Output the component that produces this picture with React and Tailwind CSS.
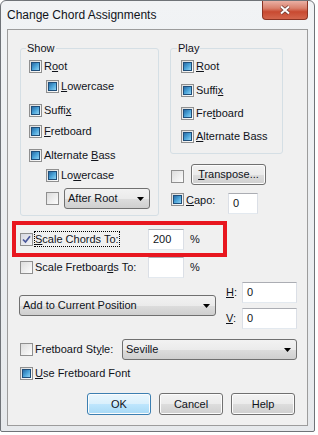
import React from "react";

const Box = ({ state = "off" }) => {
  if (state === "tick") {
    return (
      <span className="flex h-[13px] w-[13px] shrink-0 items-center justify-center border border-[#8f8f8f] bg-gradient-to-br from-[#d6d7e0] to-[#f3f3f7]">
        <svg width="9" height="9" viewBox="0 0 9 9">
          <path d="M1 4.5 L3.5 7 L8 1.2" fill="none" stroke="#4a579a" strokeWidth="1.7" />
        </svg>
      </span>
    );
  }
  return (
    <span className="flex h-[13px] w-[13px] shrink-0 items-center justify-center border border-[#8f8f8f] bg-gradient-to-br from-[#dcdcdc] to-[#fdfdfd]">
      {state === "on" && (
        <span className="h-[9px] w-[9px] border border-[#1f4e79] bg-gradient-to-br from-[#2a6ca5] via-[#4aa3d8] to-[#8fd3f2]" />
      )}
    </span>
  );
};

const Opt = ({ state, children, className = "" }) => (
  <div className={`flex h-[13px] items-center gap-[2px] ${className}`}>
    <Box state={state} />
    <span className="whitespace-nowrap">{children}</span>
  </div>
);

const Combo = ({ children, className = "" }) => (
  <div
    className={`flex h-[21px] shrink-0 items-center justify-between rounded-[3px] border border-[#707070] bg-[linear-gradient(#f2f2f2_0%,#ebebeb_50%,#dddddd_51%,#cfcfcf_100%)] pl-[3px] pr-[5px] ${className}`}
  >
    <span className="whitespace-nowrap">{children}</span>
    <svg width="7" height="4" viewBox="0 0 7 4">
      <path d="M0 0h7L3.5 4z" fill="#000" />
    </svg>
  </div>
);

const Field = ({ value, className = "" }) => (
  <div
    className={`h-[21px] shrink-0 border border-[#abadb3] border-x-[#dbdfe6] border-b-[#e3e9ef] bg-white pl-[4px] leading-[19px] ${className}`}
  >
    {value}
  </div>
);

const Btn = ({ children, primary, className = "" }) => (
  <div
    className={`flex shrink-0 items-center justify-center rounded-[3px] border shadow-[inset_0_0_0_1px_#fcfcfc] ${
      primary
        ? "border-[#3c7fb1] bg-[linear-gradient(#eaf6fd_0%,#d9f0fc_50%,#bee6fd_51%,#a7d9f5_100%)]"
        : "border-[#707070] bg-[linear-gradient(#f2f2f2_0%,#ebebeb_50%,#dddddd_51%,#cfcfcf_100%)]"
    } ${className}`}
  >
    {children}
  </div>
);

export default function App() {
  return (
    <div className="h-[435px] w-[318px] bg-white font-['Liberation_Sans',Arial,sans-serif] text-[11px] leading-[13px] text-[#10131a]">
      <div className="h-[432px] w-[315px] rounded-t-[6px] rounded-b-[2px] border border-[#6f7378] bg-[linear-gradient(#f1f3f5,#e6e9ec)]">
        {/* title bar */}
        <div className="flex h-[28px] items-center">
          <span className="pl-[6px] text-[12px] leading-[14px]">Change Chord Assignments</span>
          <div className="ml-auto mr-[6px] flex h-[19px] w-[46px] items-center justify-center self-start rounded-b-[4px] border border-t-0 border-[#8a3424] bg-[linear-gradient(#eab0a4_0%,#d9806c_40%,#c84a31_60%,#d3664d_100%)]">
            <svg width="12" height="10" viewBox="0 0 12 10">
              <path d="M2 1.5 L10 8.5 M10 1.5 L2 8.5" stroke="#6b3b33" strokeWidth="3.6" />
              <path d="M2 1.5 L10 8.5 M10 1.5 L2 8.5" stroke="#ffffff" strokeWidth="2" />
            </svg>
          </div>
        </div>

        {/* client area */}
        <div className="ml-[6px] flex h-[397px] w-[301px] flex-col border border-[#9c9c9c] bg-[#f0f0f0]">
          <div className="ml-[12px] mt-[18px] flex items-start">
            <div className="relative h-[168px] w-[139px] shrink-0 rounded-[3px] border border-[#d5dfe5]">
              <span className="absolute -top-[7px] left-[5px] bg-[#f0f0f0] px-px">Show</span>
              <div className="flex flex-col pl-[8px] pt-[11px]">
                <Opt state="on">
                  R<u>o</u>ot
                </Opt>
                <Opt state="on" className="ml-[17px] mt-[7px]">
                  <u>L</u>owercase
                </Opt>
                <Opt state="on" className="mt-[11px]">
                  Suffi<u>x</u>
                </Opt>
                <Opt state="on" className="mt-[8px]">
                  <u>F</u>retboard
                </Opt>
                <Opt state="on" className="mt-[11px]">
                  Alternate <u>B</u>ass
                </Opt>
                <Opt state="on" className="ml-[17px] mt-[7px]">
                  Lo<u>w</u>ercase
                </Opt>
                <div className="ml-[17px] mt-[6px] flex items-center gap-[5px]">
                  <Box />
                  <Combo className="w-[86px]">After Root</Combo>
                </div>
              </div>
            </div>

            <div className="ml-[11px] flex flex-col">
              <div className="relative h-[106px] w-[113px] rounded-[3px] border border-[#d5dfe5]">
                <span className="absolute -top-[7px] left-[6px] bg-[#f0f0f0] px-px">Play</span>
                <div className="flex flex-col pl-[10px] pt-[11px]">
                  <Opt state="on">
                    <u>R</u>oot
                  </Opt>
                  <Opt state="on" className="mt-[11px]">
                    Suffi<u>x</u>
                  </Opt>
                  <Opt state="on" className="mt-[10px]">
                    Fre<u>t</u>board
                  </Opt>
                  <Opt state="on" className="mt-[10px]">
                    <u>A</u>lternate Bass
                  </Opt>
                </div>
              </div>

              <div className="mt-[10px] flex items-start">
                <span className="ml-px mt-[6px]">
                  <Box />
                </span>
                <Btn className="ml-[7px] h-[21px] w-[75px]">
                  <span>
                    <u>T</u>ranspose...
                  </span>
                </Btn>
              </div>

              <div className="mt-[8px] flex items-start">
                <span className="ml-px">
                  <Box state="on" />
                </span>
                <span className="ml-[2px] w-[42px] pt-px">
                  <u>C</u>apo:
                </span>
                <Field value="0" className="w-[30px]" />
              </div>
            </div>
          </div>

          {/* highlighted row */}
          <div className="ml-[4px] mt-[5px] flex h-[36px] w-[215px] items-center border-4 border-[#e8161f] pl-[4px]">
            <Box state="tick" />
            <span className="ml-px w-[114px] shrink-0">
              <span className="border border-dotted border-black py-px">
                <u>S</u>cale Chords To:
              </span>
            </span>
            <Field value="200" className="w-[36px]" />
            <span className="ml-[6px]">%</span>
          </div>

          <div className="ml-[12px] flex h-[21px] items-center">
            <Box />
            <span className="ml-[2px] w-[113px] shrink-0 whitespace-nowrap">
              Scale Fretboar<u>d</u>s To:
            </span>
            <Field value="" className="w-[36px]" />
            <span className="ml-[6px]">%</span>
          </div>

          <div className="mt-[4px] flex items-start">
            <Combo className="ml-[11px] mt-[13px] w-[197px]">Add to Current Position</Combo>
            <div className="ml-[10px] flex flex-col">
              <div className="flex items-center">
                <span className="w-[16px]">
                  <u>H</u>:
                </span>
                <Field value="0" className="w-[55px]" />
              </div>
              <div className="mt-[5px] flex items-center">
                <span className="w-[16px]">
                  <u>V</u>:
                </span>
                <Field value="0" className="w-[55px]" />
              </div>
            </div>
          </div>

          <div className="ml-[12px] mt-[10px] flex h-[21px] items-center">
            <Box />
            <span className="ml-[2px] w-[87px] shrink-0 whitespace-nowrap">
              Fretboard St<u>y</u>le:
            </span>
            <Combo className="w-[175px]">Seville</Combo>
          </div>

          <Opt state="on" className="ml-[12px] mt-[7px]">
            <u>U</u>se Fretboard Font
          </Opt>

          <div className="ml-[79px] mt-[13px] flex gap-[8px]">
            <Btn primary className="h-[22px] w-[64px]">
              OK
            </Btn>
            <Btn className="h-[22px] w-[64px]">Cancel</Btn>
            <Btn className="h-[22px] w-[64px]">Help</Btn>
          </div>
        </div>
      </div>
    </div>
  );
}
